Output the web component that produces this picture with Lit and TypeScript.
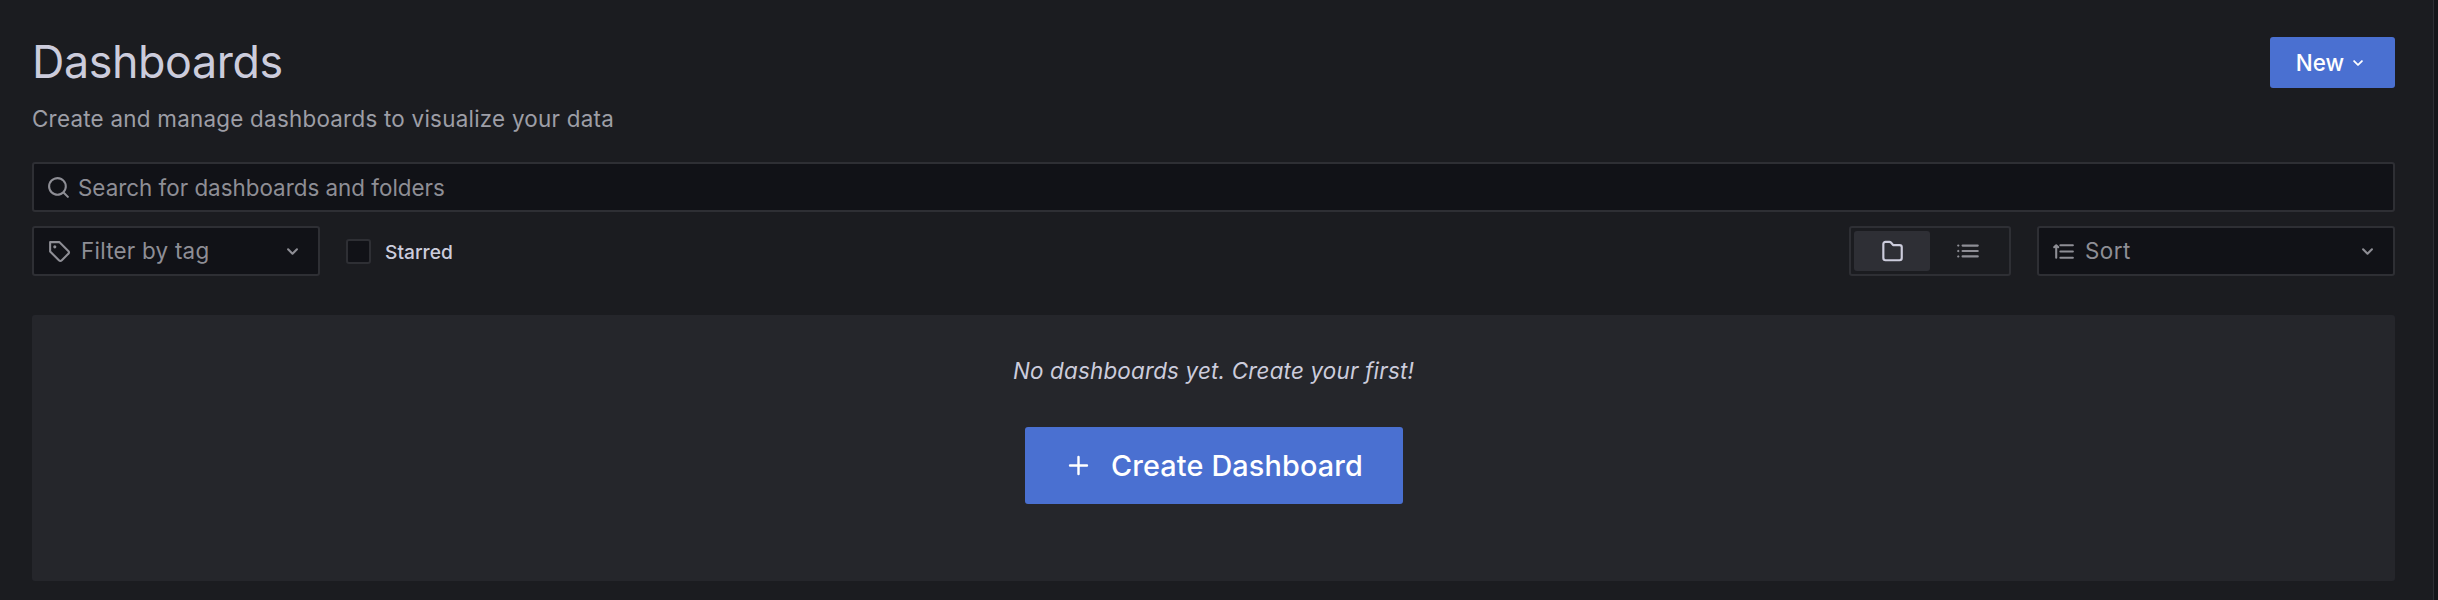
import { LitElement, html, css } from 'lit';
import { customElement } from 'lit/decorators.js';

const chevron = html`<svg class="chev" viewBox="0 0 24 24" fill="currentColor"><path d="M17 9.17a1 1 0 0 0-1.41 0L12 12.71 8.46 9.17a1 1 0 0 0-1.41 1.42l4.24 4.24a1 1 0 0 0 1.42 0L17 10.59a1 1 0 0 0 0-1.42z"/></svg>`;

@customElement('app-root')
export class AppRoot extends LitElement {
  static styles = css`
    :host {
      display: block;
      position: relative;
      height: 600px;
      overflow: hidden;
      background: #1b1c20;
      font-family: Inter, 'Liberation Sans', sans-serif;
      color: #ccccdc;
      box-sizing: border-box;
      padding: 37px 43px 0 32px;
    }

    /* scrollbar track along the window edge */
    .track {
      position: absolute;
      top: 0;
      right: 0;
      bottom: 0;
      width: 4px;
      background: #141519;
      border-left: 1px solid #2c2d32;
    }

    .header {
      display: flex;
      justify-content: space-between;
      align-items: flex-start;
      height: 125px;
    }

    h1 {
      margin: 0;
      font-size: 44.8px;
      line-height: 50px;
      font-weight: 400;
      letter-spacing: -0.4px;
      color: #ccccdc;
    }

    .sub {
      margin-top: 17px;
      font-size: 22.4px;
      line-height: 30px;
      letter-spacing: 0.25px;
      color: #9d9ea6;
    }

    button {
      border: 0;
      font-family: inherit;
      color: #fff;
      background: #4a70d1;
      border-radius: 3px;
      display: flex;
      align-items: center;
      justify-content: center;
    }

    .new {
      width: 125px;
      height: 51px;
      font-size: 22.4px;
      font-weight: 500;
      gap: 3px;
    }

    .new .chev {
      width: 22px;
      height: 22px;
    }

    .field {
      box-sizing: border-box;
      background: #111217;
      border: 2px solid #2e2f34;
      border-radius: 3px;
      height: 50px;
      display: flex;
      align-items: center;
      font-size: 22.4px;
      line-height: 46px;
      padding-top: 1px;
      color: #8e8e95;
    }

    .search {
      padding-left: 12px;
      gap: 7px;
    }

    .search svg,
    .filter svg.tag {
      width: 25px;
      height: 25px;
      flex: none;
    }

    .row {
      display: flex;
      align-items: center;
      margin-top: 14px;
      height: 50px;
    }

    .filter {
      width: 288px;
      padding: 0 13px 0 13px;
      gap: 9px;
      letter-spacing: 0.25px;
    }

    .field .chev {
      width: 25px;
      height: 25px;
      margin-left: auto;
      color: #8e8e95;
    }

    .check {
      box-sizing: border-box;
      width: 25px;
      height: 25px;
      margin-left: 26px;
      background: #111217;
      border: 2px solid #2e2f34;
      border-radius: 3px;
    }

    .starred {
      margin-left: 14px;
      padding-top: 2px;
      font-size: 19.2px;
      font-weight: 500;
      color: #ccccdc;
    }

    .toggle {
      box-sizing: border-box;
      margin-left: auto;
      width: 162px;
      height: 50px;
      padding: 3px;
      display: flex;
      border: 2px solid #2e2f34;
      border-radius: 3px;
    }

    .toggle div {
      flex: 1;
      display: flex;
      align-items: center;
      justify-content: center;
      border-radius: 3px;
      color: #8e8e95;
    }

    .toggle .on {
      background: #2e2f35;
      color: #ccccdc;
    }

    .toggle svg {
      width: 26px;
      height: 26px;
    }

    .sort {
      width: 358px;
      margin-left: 26px;
      padding: 0 13px 0 12px;
      gap: 9px;
      letter-spacing: 0.5px;
    }

    .sort svg.ico {
      width: 25px;
      height: 25px;
      flex: none;
    }

    .empty {
      margin-top: 39px;
      height: 266px;
      background: #25262b;
      border-radius: 3px;
      display: flex;
      flex-direction: column;
      align-items: center;
      padding-top: 41px;
      box-sizing: border-box;
    }

    .empty em {
      font-size: 22.4px;
      line-height: 30px;
      letter-spacing: 0.2px;
      color: #ccccdc;
    }

    .create {
      margin-top: 41px;
      width: 378px;
      height: 77px;
      font-size: 28.8px;
      font-weight: 500;
      letter-spacing: 0.15px;
      gap: 18px;
    }

    .create svg {
      width: 29px;
      height: 29px;
    }
  `;

  render() {
    return html`
      <div class="header">
        <div>
          <h1>Dashboards</h1>
          <div class="sub">Create and manage dashboards to visualize your data</div>
        </div>
        <button class="new">New ${chevron}</button>
      </div>

      <div class="field search">
        <svg viewBox="0 0 24 24" fill="currentColor"><path d="M21.71 20.29 18 16.61A9 9 0 1 0 16.61 18l3.68 3.68a1 1 0 0 0 1.42 0 1 1 0 0 0 0-1.39zM11 18a7 7 0 1 1 7-7 7 7 0 0 1-7 7z"/></svg>
        Search for dashboards and folders
      </div>

      <div class="row">
        <div class="field filter">
          <svg class="tag" viewBox="0 0 24 24" fill="currentColor"><path d="M7.5 6A1.5 1.5 0 1 0 9 7.5 1.5 1.5 0 0 0 7.5 6zm13.62 4.71-8.41-8.42A1 1 0 0 0 12 2H3a1 1 0 0 0-1 1v9a1 1 0 0 0 .29.71l8.42 8.41a3 3 0 0 0 4.24 0L21.12 15a3 3 0 0 0 0-4.24zm-1.41 2.82-6.18 6.17a1 1 0 0 1-1.41 0L4 11.59V4h7.59l8.12 8.12a1 1 0 0 1 0 1.41z"/></svg>
          Filter by tag ${chevron}
        </div>
        <div class="check"></div>
        <div class="starred">Starred</div>

        <div class="toggle">
          <div class="on">
            <svg viewBox="0 0 24 24" fill="none" stroke="currentColor" stroke-width="2" stroke-linejoin="round"><path d="M4 5.5a2 2 0 0 1 2-2h3.500a2 2 0 0 1 1.500.7L13 6.500h6a2 2 0 0 1 2 2v10a2 2 0 0 1-2 2H6a2 2 0 0 1-2-2z"/></svg>
          </div>
          <div>
            <svg viewBox="0 0 24 24" fill="currentColor"><path d="M3.710 16.290a1 1 0 1 0 0 1.420 1 1 0 0 0 0-1.420zM7 8h14a1 1 0 0 0 0-2H7a1 1 0 0 0 0 2zm-3.290 3.290a1 1 0 1 0 0 1.420 1 1 0 0 0 0-1.420zM21 11H7a1 1 0 0 0 0 2h14a1 1 0 0 0 0-2zM3.710 6.290a1 1 0 1 0 0 1.420 1 1 0 0 0 0-1.420zM21 16H7a1 1 0 0 0 0 2h14a1 1 0 0 0 0-2z"/></svg>
          </div>
        </div>

        <div class="field sort">
          <svg class="ico" viewBox="0 0 24 24" fill="currentColor"><path d="M9 7h12a1 1 0 0 0 0-2H9a1 1 0 0 0 0 2zm12 4H9a1 1 0 0 0 0 2h12a1 1 0 0 0 0-2zm0 6H9a1 1 0 0 0 0 2h12a1 1 0 0 0 0-2zM5.700 5.300a1 1 0 0 0-1.400 0l-2 2a1 1 0 0 0 1.400 1.400l.3-.3V18a1 1 0 0 0 2 0V8.400l.3.300a1 1 0 0 0 1.400-1.400z"/></svg>
          Sort ${chevron}
        </div>
      </div>

      <div class="empty">
        <em>No dashboards yet. Create your first!</em>
        <button class="create">
          <svg viewBox="0 0 24 24" fill="currentColor"><path d="M19 11h-6V5a1 1 0 0 0-2 0v6H5a1 1 0 0 0 0 2h6v6a1 1 0 0 0 2 0v-6h6a1 1 0 0 0 0-2z"/></svg>
          Create Dashboard
        </button>
      </div>

      <div class="track"></div>
    `;
  }
}
